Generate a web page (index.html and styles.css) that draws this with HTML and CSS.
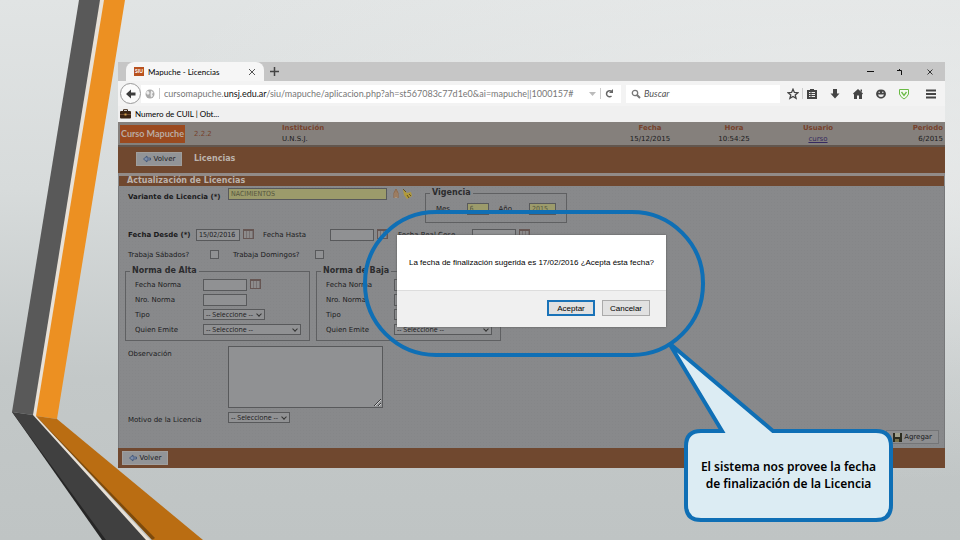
FILE: index.html
```html
<!DOCTYPE html>
<html lang="es">
<head>
    <meta charset="UTF-8">
    <meta name="viewport" content="width=device-width, initial-scale=1.0">
    <title>Mapuche - Licencias</title>
    <link rel="stylesheet" href="styles.css">
</head>
<body>
    <div class="slide">
        <!-- Cintas decorativas -->
        <svg class="cintas" width="210" height="540" viewBox="0 0 210 540" aria-hidden="true">
            <path fill="#e8e1d7" d="M98 0h8L38 418l112 122h-6L32 416z"/>
            <path fill="#595959" d="M79 0h21L33 415l-21-3z"/>
            <path fill="#ec9022" d="M104 0h21L57 419l-21-3z"/>
            <path fill="#262626" d="M12 412l4 2 91 126h-5z"/>
            <path fill="#404040" d="M12 412l21 3 113 125h-40z"/>
            <path fill="#ba6d12" d="M36 416l21 3 146 121h-50z"/>
            <path fill="#7d4a0c" d="M36 416l119 122-3 2z"/>
        </svg>

        <div class="ventana">
            <!-- Navegador -->
            <div class="pestanas">
                <div class="pestana">
                    <span class="siu">SIU</span>
                    <span class="pestana-titulo">Mapuche - Licencias</span>
                    <svg width="8" height="8" viewBox="0 0 8 8"><path d="M1 1l6 6M7 1L1 7" stroke="#555" fill="none"/></svg>
                </div>
                <svg class="nueva" width="9" height="9" viewBox="0 0 9 9"><path d="M4.5 0v9M0 4.5h9" stroke="#444" stroke-width="1.5"/></svg>
                <div class="controles">
                    <svg width="8" height="8" viewBox="0 0 8 8"><path d="M1 3.5h7" stroke="#111"/></svg>
                    <svg width="8" height="8" viewBox="0 0 8 8"><path d="M1 2.5h4.5V7M3.5 1v1.5" stroke="#111" fill="none"/></svg>
                    <svg width="8" height="8" viewBox="0 0 8 8"><path d="M1.5 1.5l5 5M6.5 1.5l-5 5" stroke="#333" fill="none"/></svg>
                </div>
            </div>
            <div class="navegacion">
                <button class="atras" aria-label="Atrás">
                    <svg width="12" height="12" viewBox="0 0 12 12"><path d="M1 6l5-4.5v3h4.5v3H6v3z" fill="#3c3c3c"/></svg>
                </button>
                <div class="direccion">
                    <svg width="10" height="10" viewBox="0 0 10 10"><circle cx="5" cy="5" r="4.5" fill="#aaa"/><path d="M2 2l2 .5.5 2L3 6 1 4zM6 1.5l2.5 2L7 5l1 2-2 1.5L5.5 6z" fill="#eee"/></svg>
                    <span class="separador"></span>
                    <span class="url">cursomapuche.<b>unsj.edu.ar</b>/siu/mapuche/aplicacion.php?ah=st567083c77d1e0&amp;ai=mapuche||1000157#</span>
                    <svg width="7" height="6" viewBox="0 0 7 6"><path d="M0 1h7L3.5 5z" fill="#bbb"/></svg>
                    <span class="separador"></span>
                    <svg width="9" height="9" viewBox="0 0 9 9"><path d="M6.5 7A3 3 0 1 1 7 3" stroke="#666" stroke-width="1.5" fill="none"/><path d="M8 0v4H4z" fill="#666"/></svg>
                </div>
                <div class="busqueda">
                    <svg width="10" height="10" viewBox="0 0 10 10"><circle cx="4" cy="4" r="2.7" stroke="#777" stroke-width="1.3" fill="none"/><path d="M6 6l3 3" stroke="#777" stroke-width="2"/></svg>
                    <input type="text" placeholder="Buscar" aria-label="Buscar">
                </div>
                <div class="herramientas">
                    <svg width="12" height="12" viewBox="0 0 12 12"><path d="M6 1.2l1.4 3.2 3.5.3-2.7 2.2.9 3.5L6 8.5l-3.1 1.9.9-3.5L1.1 4.7l3.5-.3z" stroke="#444" stroke-width="1.3" fill="none"/></svg>
                    <span class="separador"></span>
                    <svg width="12" height="12" viewBox="0 0 12 12"><path d="M1 2h10v9H1zM4 1h4v2H4z" fill="#444"/><path d="M3 4.5h1.5M5.5 4.5H9M3 6.5h1.5M5.5 6.5H9M3 8.5h1.5M5.5 8.5H9" stroke="#eee"/></svg>
                    <svg width="12" height="12" viewBox="0 0 12 12"><path d="M4 1h4v4.5h2.5L6 10.5 1.5 5.5H4z" fill="#444"/></svg>
                    <svg width="12" height="12" viewBox="0 0 12 12"><path d="M6 1l5 4.5-1 1V11H7V7.5H5V11H2V6.5l-1-1zM8.5 1.5H10V4L8.5 3z" fill="#444"/></svg>
                    <svg width="12" height="12" viewBox="0 0 12 12"><path d="M6 1.5c7 0 6 9 0 9S-1 1.5 6 1.5z" fill="#444"/><path d="M3 6.500h6Q8.5 9 6 9T3 6.500zM3.5 3.800h1.5v1H3.5zM7 3.800h1.5v1H7z" fill="#eee"/></svg>
                    <svg width="12" height="12" viewBox="0 0 12 12"><path d="M1.5 1.5h9V6Q9.5 9 6 11 2.5 9 1.5 6z" stroke="#6aba45" fill="#f4faf2"/><path d="M3.5 4L6 7.5 8.5 4" stroke="#6aba45" stroke-width="1.3" fill="none"/></svg>
                    <svg class="menu" width="12" height="12" viewBox="0 0 12 12"><path d="M1 2.5h10M1 6h10M1 9.5h10" stroke="#444" stroke-width="2"/></svg>
                </div>
            </div>
            <div class="marcadores">
                <svg width="11" height="10" viewBox="0 0 11 10"><path d="M3.5 2V.7h4V2" stroke="#3b2413" fill="none"/><rect y="2" width="11" height="7.5" rx="1" fill="#3b2413"/><path d="M0 5.5h11" stroke="#70482f"/><path d="M4.5 4.5h2v2h-2z" fill="#d5a34a"/></svg>
                <span>Numero de CUIL | Obt...</span>
            </div>

            <!-- Aplicación -->
            <header class="encabezado">
                <div class="marca"><span class="logo">Curso Mapuche</span><span class="version">2.2.2</span></div>
                <div class="dato izquierda"><b>Institución</b><span>U.N.S.J.</span></div>
                <div class="dato"><b>Fecha</b><span>15/12/2015</span></div>
                <div class="dato"><b>Hora</b><span>10:54:25</span></div>
                <div class="dato"><b>Usuario</b><a href="#">curso</a></div>
                <div class="dato derecha"><b>Periodo</b><span>6/2015</span></div>
            </header>
            <div class="barra">
                <button class="volver"><svg width="8" height="8" viewBox="0 0 8 8"><path d="M.5 4L4 1v2h3.5v2H4v2z" fill="#7d8da8" stroke="#344c72" stroke-width=".7"/></svg>Volver</button>
                <h1>Licencias</h1>
            </div>
            <h2>Actualización de Licencias</h2>

            <form class="formulario">
                <div class="fila-variante">
                    <label class="fuerte" for="variante">Variante de Licencia (*)</label>
                    <input class="amarillo" type="text" id="variante" value="NACIMIENTOS">
                    <svg class="lapiz" width="22" height="12" viewBox="0 0 22 12"><path d="M2 10V5l2-4 2 4v5M4 3v6" stroke="#8e6544" fill="#a9957f"/><path d="M11 1l4 4 4-1 1 4-5 3-3-4z" fill="#b09a3c"/><path d="M11 1l3 3M15 7l2 3M17 6l2 2" stroke="#66501f" fill="none"/></svg>
                    <fieldset class="vigencia">
                        <legend>Vigencia</legend>
                        <label for="mes">Mes</label>
                        <input class="amarillo" type="text" id="mes" value="6">
                        <label for="anio">Año</label>
                        <input class="amarillo" type="text" id="anio" value="2015">
                    </fieldset>
                </div>
                <div class="fila-fechas">
                    <label class="fuerte" for="desde">Fecha Desde (*)</label>
                    <div class="fecha"><input type="text" id="desde" value="15/02/2016"><button type="button" class="calendario" aria-label="Calendario"></button></div>
                    <label for="hasta">Fecha Hasta</label>
                    <div class="fecha"><input type="text" id="hasta"><button type="button" class="calendario" aria-label="Calendario"></button></div>
                    <label for="real">Fecha Real Cese</label>
                    <div class="fecha"><input type="text" id="real"><button type="button" class="calendario" aria-label="Calendario"></button></div>
                </div>
                <div class="fila-dias">
                    <label for="sabados">Trabaja Sábados?</label>
                    <input type="checkbox" id="sabados">
                    <label for="domingos">Trabaja Domingos?</label>
                    <input type="checkbox" id="domingos">
                </div>
                <div class="normas">
                    <fieldset class="norma">
                        <legend>Norma de Alta</legend>
                        <label for="fechaAlta">Fecha Norma</label>
                        <div class="fecha"><input type="text" id="fechaAlta"><button type="button" class="calendario" aria-label="Calendario"></button></div>
                        <label for="nroAlta">Nro. Norma</label>
                        <div class="fecha"><input type="text" id="nroAlta"></div>
                        <label for="tipoAlta">Tipo</label>
                        <div class="lista corta"><select id="tipoAlta"><option>-- Seleccione --</option></select></div>
                        <label for="emiteAlta">Quien Emite</label>
                        <div class="lista"><select id="emiteAlta"><option>-- Seleccione --</option></select></div>
                    </fieldset>
                    <fieldset class="norma">
                        <legend>Norma de Baja</legend>
                        <label for="fechaBaja">Fecha Norma</label>
                        <div class="fecha"><input type="text" id="fechaBaja"><button type="button" class="calendario" aria-label="Calendario"></button></div>
                        <label for="nroBaja">Nro. Norma</label>
                        <div class="fecha"><input type="text" id="nroBaja"></div>
                        <label for="tipoBaja">Tipo</label>
                        <div class="lista corta"><select id="tipoBaja"><option>-- Seleccione --</option></select></div>
                        <label for="emiteBaja">Quien Emite</label>
                        <div class="lista"><select id="emiteBaja"><option>-- Seleccione --</option></select></div>
                    </fieldset>
                </div>
                <div class="fila-texto">
                    <label for="observacion">Observación</label>
                    <textarea id="observacion"></textarea>
                    <label for="motivo">Motivo de la Licencia</label>
                    <div class="lista corta"><select id="motivo"><option>-- Seleccione --</option></select></div>
                </div>
                <div class="acciones">
                    <button type="button" class="agregar"><svg width="9" height="9" viewBox="0 0 9 9"><path d="M0 0h9v9H0z" fill="#2c2c20"/><path d="M2 0h5v4H2z" fill="#a0a08c"/><path d="M2 6h4v3H2z" fill="#77704a"/></svg>Agregar</button>
                </div>
            </form>
            <div class="pie">
                <button class="volver"><svg width="8" height="8" viewBox="0 0 8 8"><path d="M.5 4L4 1v2h3.5v2H4v2z" fill="#7d8da8" stroke="#344c72" stroke-width=".7"/></svg>Volver</button>
            </div>

            <div class="resalte"></div>
            <div class="dialogo" role="dialog">
                <p>La fecha de finalización sugerida es 17/02/2016 ¿Acepta ésta fecha?</p>
                <div class="dialogo-botones">
                    <button class="aceptar">Aceptar</button>
                    <button>Cancelar</button>
                </div>
            </div>
            <div class="globo">
                <svg width="228" height="180" viewBox="0 0 228 180" aria-hidden="true">
                    <path d="M2 1L106 89h103q15 0 15 15v59q0 15-15 15H34q-15 0-15-15v-59q0-15 15-15h21z" fill="#dcecf3" stroke="#0f6fb5" stroke-width="4"/>
                </svg>
                <p>El sistema nos provee la fecha de finalización de la Licencia</p>
            </div>
        </div>
    </div>
</body>
</html>
```
FILE: styles.css
```css
* {
    box-sizing: border-box;
}

body {
    margin: 0;
    font-family: "DejaVu Sans", Verdana, sans-serif;
    font-size: 7px;
    color: #1b1b1d;
}

button, input, select, textarea {
    font: inherit;
    color: inherit;
    margin: 0;
    padding: 0;
    border-radius: 0;
    outline: none;
}

svg {
    display: block;
    flex: none;
}

.slide {
    position: relative;
    min-height: 100vh;
    padding: 62px 15px 40px 118px;
    overflow: hidden;
    background: linear-gradient(180deg, #e1e4e4 0%, #d7dbdb 35%, #c3c8c8 70%, #bfc4c4 100%);
}

.slide::before {
    content: "";
    position: absolute;
    inset: 0;
    background: radial-gradient(ellipse at 90% 30%, rgba(240, 241, 241, 0.6), rgba(240, 241, 241, 0) 60%);
}

.cintas {
    position: absolute;
    left: 0;
    top: 0;
}

.ventana {
    position: relative;
    background-color: #88898b;
}

/* Navegador */
.pestanas {
    display: flex;
    align-items: center;
    height: 19px;
    background-color: #c6c6c6;
    font-family: Lato, "Open Sans", sans-serif;
    font-size: 8px;
    color: #000;
}

.pestana {
    display: flex;
    align-items: center;
    gap: 4px;
    width: 138px;
    height: 19px;
    margin-left: 8px;
    padding: 0 8px;
    background-color: #f6f6f6;
    border-radius: 8px 8px 0 0;
}

.pestana-titulo {
    flex: 1;
    white-space: nowrap;
}

.siu {
    padding: 0 1px;
    font-size: 5px;
    line-height: 9px;
    font-weight: bold;
    color: #fff;
    background-color: #b9521f;
}

.nueva {
    margin-left: 6px;
}

.controles {
    display: flex;
    gap: 22px;
    margin-left: auto;
    padding-right: 11px;
}

.navegacion {
    display: flex;
    align-items: center;
    height: 25px;
    padding: 0 8px 0 2px;
    background-color: #f3f3f3;
    font-family: Lato, "Open Sans", sans-serif;
    font-size: 9px;
    color: #777;
}

.atras {
    display: grid;
    place-items: center;
    flex: none;
    width: 21px;
    height: 21px;
    border: 1px solid #999;
    border-radius: 50%;
    background-color: #fbfbfb;
}

.direccion, .busqueda {
    display: flex;
    align-items: center;
    height: 18px;
    background-color: #fff;
}

.direccion {
    flex: 1;
    gap: 4px;
    padding: 0 7px 0 4px;
    min-width: 0;
}

.url {
    flex: 1;
    white-space: nowrap;
    overflow: hidden;
}

.url b {
    font-weight: normal;
    color: #111;
}

.separador {
    width: 1px;
    height: 11px;
    margin: 0 2px;
    background-color: #ccc;
}

.direccion .separador {
    margin: 0;
}

.busqueda {
    gap: 3px;
    width: 154px;
    margin-left: 5px;
    padding-left: 5px;
}

.busqueda input {
    width: 100%;
    border: none;
    background: none;
    font-style: italic;
}

.busqueda input::placeholder {
    color: #555;
}

.herramientas {
    display: flex;
    align-items: center;
    gap: 11px;
    margin-left: 7px;
}

.herramientas .separador {
    margin: 0 -8px;
}

.menu {
    margin-left: 4px;
}

.marcadores {
    display: flex;
    align-items: center;
    gap: 4px;
    height: 16px;
    padding-left: 2px;
    background-color: #f0f0f0;
    font-family: Lato, "Open Sans", sans-serif;
    font-size: 8px;
    color: #000;
}

/* Aplicación */
.encabezado {
    display: grid;
    grid-template-columns: 162px 1fr 84px 84px 84px 85px;
    align-items: center;
    height: 25px;
    background-color: #85807c;
    border-bottom: 2px solid #62564e;
}

.marca {
    display: flex;
    align-items: center;
    gap: 9px;
    padding-left: 2px;
    color: #77422c;
}

.logo {
    width: 65px;
    font-family: Lato, "Open Sans", sans-serif;
    font-size: 9px;
    font-weight: bold;
    line-height: 18px;
    text-align: center;
    white-space: nowrap;
    color: #b9aba2;
    background-color: #9b4a1f;
}

.dato {
    display: flex;
    flex-direction: column;
    align-items: center;
    line-height: 11px;
}

.dato b {
    color: #77422c;
}

.dato a {
    color: #352a60;
}

.izquierda {
    align-items: flex-start;
    padding-left: 2px;
}

.derecha {
    align-items: flex-end;
    padding-right: 2px;
}

.barra {
    display: flex;
    align-items: center;
    gap: 12px;
    height: 26px;
    padding: 0 0 3px 18px;
    background-color: #70482f;
}

.volver {
    display: flex;
    align-items: center;
    justify-content: center;
    gap: 3px;
    width: 46px;
    height: 14px;
    border: 1px solid #a09e9c;
    background-color: #929497;
}

h1, h2 {
    margin: 0;
    font-size: 8px;
    line-height: 10px;
    color: #bcb3ad;
}

h2 {
    margin: 0 1px;
    padding-left: 8px;
    border-top: 3px solid #928b88;
    background-color: #70482f;
}

.formulario {
    padding: 1px 5px 4px 6px;
    border: solid #77787a;
    border-width: 0 1px;
    background-image: radial-gradient(#858688 1px, transparent 1px);
    background-size: 3px 3px;
}

.formulario input, .formulario select, .formulario textarea {
    border: 1px solid #58595b;
    background-color: #909193;
}

.formulario .amarillo {
    height: 12px;
    padding-left: 2px;
    font-family: "DejaVu Sans Condensed", "DejaVu Sans", sans-serif;
    background-color: #9c9b6b;
    color: #55553e;
}

.fuerte {
    font-weight: bold;
}

fieldset {
    min-width: 0;
    margin: 0;
    border: 1px solid #5f6062;
}

legend {
    padding: 0 2px;
    font-size: 8px;
    line-height: 12px;
    font-weight: bold;
    color: #2c2c2e;
}

.fila-variante {
    display: grid;
    grid-template-columns: 100px 159px 38px 142px;
    height: 39px;
    padding-left: 3px;
}

.fila-variante > label {
    padding-top: 6px;
    white-space: nowrap;
}

.fila-variante > .amarillo {
    margin-top: 1px;
}

.lapiz {
    margin: 1px 0 0 5px;
}

.vigencia {
    display: flex;
    align-items: center;
    height: 36px;
    padding: 0 10px 4px;
}

.vigencia legend {
    margin-left: -6px;
}

.vigencia label {
    width: 32px;
}

.vigencia input {
    width: 22px;
    margin-right: 10px;
}

.vigencia #anio {
    width: 27px;
    margin: 0;
}

.fila-fechas {
    display: grid;
    grid-template-columns: 68px 67px 67px 68px 74px 1fr;
    align-items: center;
    height: 18px;
    padding-left: 3px;
    white-space: nowrap;
}

.fecha {
    display: flex;
    gap: 3px;
}

.fecha input {
    width: 44px;
    height: 12px;
    padding-left: 2px;
    font-family: "DejaVu Sans Condensed", "DejaVu Sans", sans-serif;
}

.calendario {
    width: 11px;
    height: 10px;
    border: 1px solid #665653;
    border-top-width: 2px;
    background: repeating-linear-gradient(90deg, #8d8b8b 0 2px, #777273 2px 3px);
}

.fila-dias {
    display: grid;
    grid-template-columns: 82px 23px 82px 12px;
    align-items: center;
    height: 21px;
    padding-left: 3px;
    white-space: nowrap;
}

.fila-dias input {
    appearance: none;
    width: 9px;
    height: 9px;
}

.normas {
    display: grid;
    grid-template-columns: 185px 185px;
    gap: 6px;
}

.norma {
    display: grid;
    grid-template-columns: 68px 1fr;
    grid-auto-rows: 15px;
    align-items: center;
    padding: 0 9px 3px;
}

.norma legend {
    margin-left: -5px;
}

.lista {
    position: relative;
    width: 98px;
}

.corta {
    width: 62px;
}

.lista select {
    appearance: none;
    display: block;
    width: 100%;
    height: 11px;
    padding-left: 2px;
    font-family: "Open Sans", sans-serif;
}

.lista::after {
    content: "";
    position: absolute;
    right: 4px;
    top: 3px;
    width: 3px;
    height: 3px;
    border: solid #333;
    border-width: 0 1px 1px 0;
    transform: rotate(45deg);
}

.fila-texto {
    display: grid;
    grid-template-columns: 100px 1fr;
    align-items: start;
    row-gap: 4px;
    padding: 5px 0 0 3px;
}

.fila-texto label {
    padding-top: 4px;
}

.fila-texto textarea {
    width: 155px;
    height: 62px;
}

.acciones {
    display: flex;
    justify-content: flex-end;
    padding-top: 6px;
}

.agregar {
    display: flex;
    align-items: center;
    gap: 2px;
    height: 14px;
    padding: 0 6px;
    border: 1px solid #747577;
    background-color: #8d8e90;
}

.pie {
    display: flex;
    align-items: center;
    height: 20px;
    padding-left: 4px;
    background-color: #70482f;
}

/* Elementos sobre la ventana */
.resalte {
    position: absolute;
    left: 245px;
    top: 148px;
    width: 342px;
    height: 147px;
    border: 4px solid #0f6fb5;
    border-radius: 73px;
}

.dialogo {
    position: absolute;
    left: 279px;
    top: 173px;
    width: 269px;
    background-color: #fff;
    box-shadow: 0 0 2px #555;
    font-family: "Liberation Sans", Arial, sans-serif;
    font-size: 8px;
    color: #000;
}

.dialogo p {
    margin: 0;
    line-height: 55px;
    text-align: center;
    white-space: nowrap;
}

.dialogo-botones {
    display: flex;
    justify-content: flex-end;
    gap: 7px;
    padding: 9px 16px 11px;
    border-top: 1px solid #ddd;
    background-color: #f0f0f0;
}

.dialogo button {
    width: 48px;
    height: 16px;
    border: 1px solid #aaa;
    background-color: #e1e1e1;
}

.dialogo .aceptar {
    border: 2px solid #1a73b8;
}

.globo {
    position: absolute;
    left: 549px;
    top: 280px;
    width: 228px;
}

.globo p {
    position: absolute;
    left: 21px;
    right: 6px;
    top: 116px;
    margin: 0;
    padding: 0 8px;
    font-family: "Noto Sans", sans-serif;
    font-size: 12px;
    font-weight: 600;
    line-height: 17px;
    text-align: center;
    color: #000;
}
```
